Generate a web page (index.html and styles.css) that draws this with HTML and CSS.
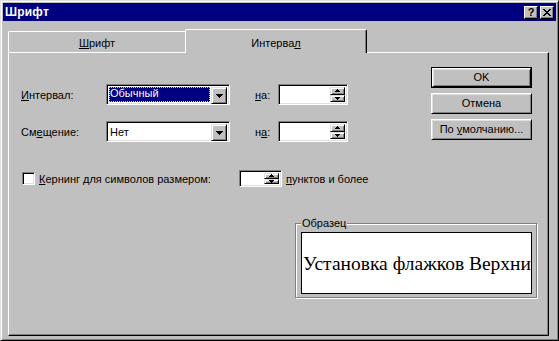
FILE: index.html
```html
<!DOCTYPE html>
<html lang="ru">
<head>
<meta charset="utf-8">
<title>Шрифт</title>
<link rel="stylesheet" href="styles.css">
</head>
<body>
<div class="window">
  <div class="titlebar">
    <span class="title">Шрифт</span>
    <div class="caption-btns">
      <span class="cbtn help">?</span>
      <span class="cbtn close"><svg width="8" height="7" viewBox="0 0 8 7" shape-rendering="crispEdges"><path d="M0 0h2v1h-2zM6 0h2v1h-2zM1 1h2v1h-2zM5 1h2v1h-2zM2 2h4v1h-4zM3 3h2v1h-2zM2 4h4v1h-4zM1 5h2v1h-2zM5 5h2v1h-2zM0 6h2v1h-2zM6 6h2v1h-2z" fill="#000"/></svg></span>
    </div>
  </div>
  <div class="client">
    <div class="tabs">
      <div class="tab"><u>Ш</u>рифт</div>
      <div class="tab active">Интерва<u>л</u></div>
    </div>
    <div class="panel">
      <div class="top">
        <div class="form">
          <div class="row">
            <span class="lbl"><u>И</u>нтервал:</span>
            <div class="combo">
              <div class="combo-val"><span class="sel">Обычный</span></div>
              <div class="drop"><svg width="7" height="4" shape-rendering="crispEdges"><path d="M0 0h7v1h-7zM1 1h5v1h-5zM2 2h3v1h-3zM3 3h1v1h-1z" fill="#000"/></svg></div>
            </div>
            <span class="lbl2"><u>н</u>а:</span>
            <div class="spin">
              <div class="spin-field"></div>
              <div class="spin-btns">
                <div class="sb"><svg width="5" height="3" shape-rendering="crispEdges"><path d="M2 0h1v1h-1zM1 1h3v1h-3zM0 2h5v1h-5z" fill="#000"/></svg></div>
                <div class="sb"><svg width="5" height="3" shape-rendering="crispEdges"><path d="M0 0h5v1h-5zM1 1h3v1h-3zM2 2h1v1h-1z" fill="#000"/></svg></div>
              </div>
            </div>
          </div>
          <div class="row">
            <span class="lbl">См<u>е</u>щение:</span>
            <div class="combo">
              <div class="combo-val"><span class="plain">Нет</span></div>
              <div class="drop"><svg width="7" height="4" shape-rendering="crispEdges"><path d="M0 0h7v1h-7zM1 1h5v1h-5zM2 2h3v1h-3zM3 3h1v1h-1z" fill="#000"/></svg></div>
            </div>
            <span class="lbl2">н<u>а</u>:</span>
            <div class="spin">
              <div class="spin-field"></div>
              <div class="spin-btns">
                <div class="sb"><svg width="5" height="3" shape-rendering="crispEdges"><path d="M2 0h1v1h-1zM1 1h3v1h-3zM0 2h5v1h-5z" fill="#000"/></svg></div>
                <div class="sb"><svg width="5" height="3" shape-rendering="crispEdges"><path d="M0 0h5v1h-5zM1 1h3v1h-3zM2 2h1v1h-1z" fill="#000"/></svg></div>
              </div>
            </div>
          </div>
        </div>
        <div class="buttons">
          <div class="btn default"><span class="btn-in"><span>OK</span></span></div>
          <div class="btn"><span class="btn-in"><span>Отмена</span></span></div>
          <div class="btn"><span class="btn-in"><span>По <u>у</u>молчанию...</span></span></div>
        </div>
      </div>
      <div class="kern">
        <span class="check"></span>
        <span class="kern-lbl"><u>К</u>ернинг для символов размером:</span>
        <div class="spin small">
          <div class="spin-field"></div>
          <div class="spin-btns">
            <div class="sb"><svg width="5" height="3" shape-rendering="crispEdges"><path d="M2 0h1v1h-1zM1 1h3v1h-3zM0 2h5v1h-5z" fill="#000"/></svg></div>
            <div class="sb"><svg width="5" height="3" shape-rendering="crispEdges"><path d="M0 0h5v1h-5zM1 1h3v1h-3zM2 2h1v1h-1z" fill="#000"/></svg></div>
          </div>
        </div>
        <span class="kern-after"><u>п</u>унктов и более</span>
      </div>
      <div class="group">
        <span class="legend">Образец</span>
        <div class="preview"><span class="preview-text">Установка флажков Верхни</span></div>
      </div>
    </div>
  </div>
</div>
</body>
</html>
```
FILE: styles.css
```css
* { box-sizing: border-box; }
html, body { margin: 0; padding: 0; }
body {
  width: 559px;
  height: 341px;
  background: #c0c0c0;
  font-family: "Liberation Sans", Arial, sans-serif;
  font-size: 11px;
  color: #000;
  overflow: hidden;
}
u { text-decoration: underline; text-underline-offset: 1px; }

.window {
  width: 559px;
  height: 341px;
  background: #c0c0c0;
  border: 1px solid;
  border-color: #dfdfdf #000 #000 #dfdfdf;
  box-shadow: inset 1px 1px #fff, inset -1px -1px #808080;
  padding: 2px;
  display: flex;
  flex-direction: column;
}

.titlebar {
  height: 18px;
  background: #000080;
  display: flex;
  align-items: center;
  justify-content: space-between;
  padding: 0 2px 0 2px;
}
.title {
  color: #fff;
  font-weight: bold;
  font-size: 12px;
  letter-spacing: 0.2px;
}
.caption-btns { display: flex; gap: 2px; }
.cbtn {
  width: 14px;
  height: 13px;
  background: #c0c0c0;
  border: 1px solid;
  border-color: #fff #000 #000 #fff;
  box-shadow: inset -1px -1px #808080;
  display: flex;
  align-items: center;
  justify-content: center;
}
.cbtn.help {
  font-weight: bold;
  font-size: 11px;
  line-height: 1;
}

.client {
  flex: 1;
  display: flex;
  flex-direction: column;
  padding: 8px 7px 2px 5px;
}

.tabs {
  display: flex;
  align-items: flex-end;
  height: 24px;
  margin-bottom: -1px;
  position: relative;
  z-index: 1;
}
.tab {
  width: 177px;
  height: 21px;
  margin-bottom: 1px;
  border-top: 1px solid #fff;
  border-left: 1px solid #fff;
  border-radius: 2px 0 0 0;
  text-align: center;
  padding-top: 5px;
  line-height: 13px;
}
.tab.active {
  width: 182px;
  height: 24px;
  margin-bottom: 0;
  background: #c0c0c0;
  border-right: 1px solid #000;
  box-shadow: inset -1px 0 #808080;
  border-radius: 2px 2px 0 0;
  padding-top: 7px;
}

.panel {
  flex: 1;
  border: 1px solid;
  border-color: #fff #000 #000 #fff;
  box-shadow: inset -1px -1px #808080;
  display: flex;
  flex-direction: column;
}

.top {
  display: flex;
  justify-content: space-between;
  align-items: flex-start;
}
.form {
  padding: 31px 0 0 12px;
  display: flex;
  flex-direction: column;
  gap: 16px;
}
.row {
  display: flex;
  align-items: center;
  height: 21px;
}
.lbl { width: 85px; }
.lbl2 { width: 23px; margin-left: 25px; }

.combo, .spin {
  height: 21px;
  background: #fff;
  border: 1px solid;
  border-color: #808080 #fff #fff #808080;
  box-shadow: inset 1px 1px #000, inset -1px -1px #dfdfdf;
  padding: 2px;
  display: flex;
}
.combo { width: 124px; }
.combo-val {
  flex: 1;
  display: flex;
  align-items: center;
  padding: 0 1px 0 0;
}
.sel {
  display: block;
  width: 100%;
  height: 15px;
  line-height: 13px;
  background: #000080;
  color: #fff;
  outline: 1px dotted #c0c0ff;
  outline-offset: -1px;
  padding-left: 1px;
}
.plain { padding-left: 1px; }
.drop, .sb {
  background: #c0c0c0;
  border: 1px solid;
  border-color: #dfdfdf #000 #000 #dfdfdf;
  box-shadow: inset 1px 1px #fff, inset -1px -1px #808080;
  display: flex;
  align-items: center;
  justify-content: center;
}
.drop { width: 16px; height: 17px; }
.drop svg { margin-top: 1px; }

.spin { width: 70px; }
.spin-field { flex: 1; }
.spin-btns {
  width: 15px;
  display: flex;
  flex-direction: column;
}
.sb { flex: 1; }
.sb svg { display: block; }

.buttons {
  padding: 14px 16px 0 0;
  display: flex;
  flex-direction: column;
  gap: 5px;
}
.btn {
  width: 101px;
  height: 21px;
  display: flex;
}
.btn-in {
  flex: 1;
  border: 1px solid;
  border-color: #fff #000 #000 #fff;
  box-shadow: inset 1px 1px #dfdfdf, inset -1px -1px #808080;
  display: flex;
  align-items: center;
  justify-content: center;
  padding-bottom: 1px;
}
.btn.default { border: 1px solid #000; }

.kern {
  display: flex;
  align-items: center;
  margin-top: 28px;
  padding-left: 13px;
  height: 17px;
}
.check {
  width: 13px;
  height: 13px;
  background: #fff;
  border: 1px solid;
  border-color: #808080 #fff #fff #808080;
  box-shadow: inset 1px 1px #000, inset -1px -1px #dfdfdf;
}
.kern-lbl { width: 200px; margin-left: 4px; }
.spin.small { width: 43px; height: 17px; }
.kern-after { margin-left: 4px; }

.group {
  position: relative;
  align-self: flex-end;
  margin: 36px 11px 0 0;
  width: 242px;
  height: 75px;
  border: 1px solid #808080;
  box-shadow: inset 1px 1px #fff, 1px 1px #fff;
  padding: 8px 4px 3px 5px;
}
.legend {
  position: absolute;
  left: 5px;
  top: -7px;
  background: #c0c0c0;
  padding: 0 1px;
  line-height: 12px;
}
.preview {
  width: 231px;
  height: 62px;
  background: #fff;
  border: 1px solid #000;
  overflow: hidden;
  display: flex;
  align-items: center;
  padding: 2px 0 0 1px;
}
.preview-text {
  font-family: "Liberation Serif", "Times New Roman", serif;
  font-size: 19.5px;
  white-space: nowrap;
}
```
